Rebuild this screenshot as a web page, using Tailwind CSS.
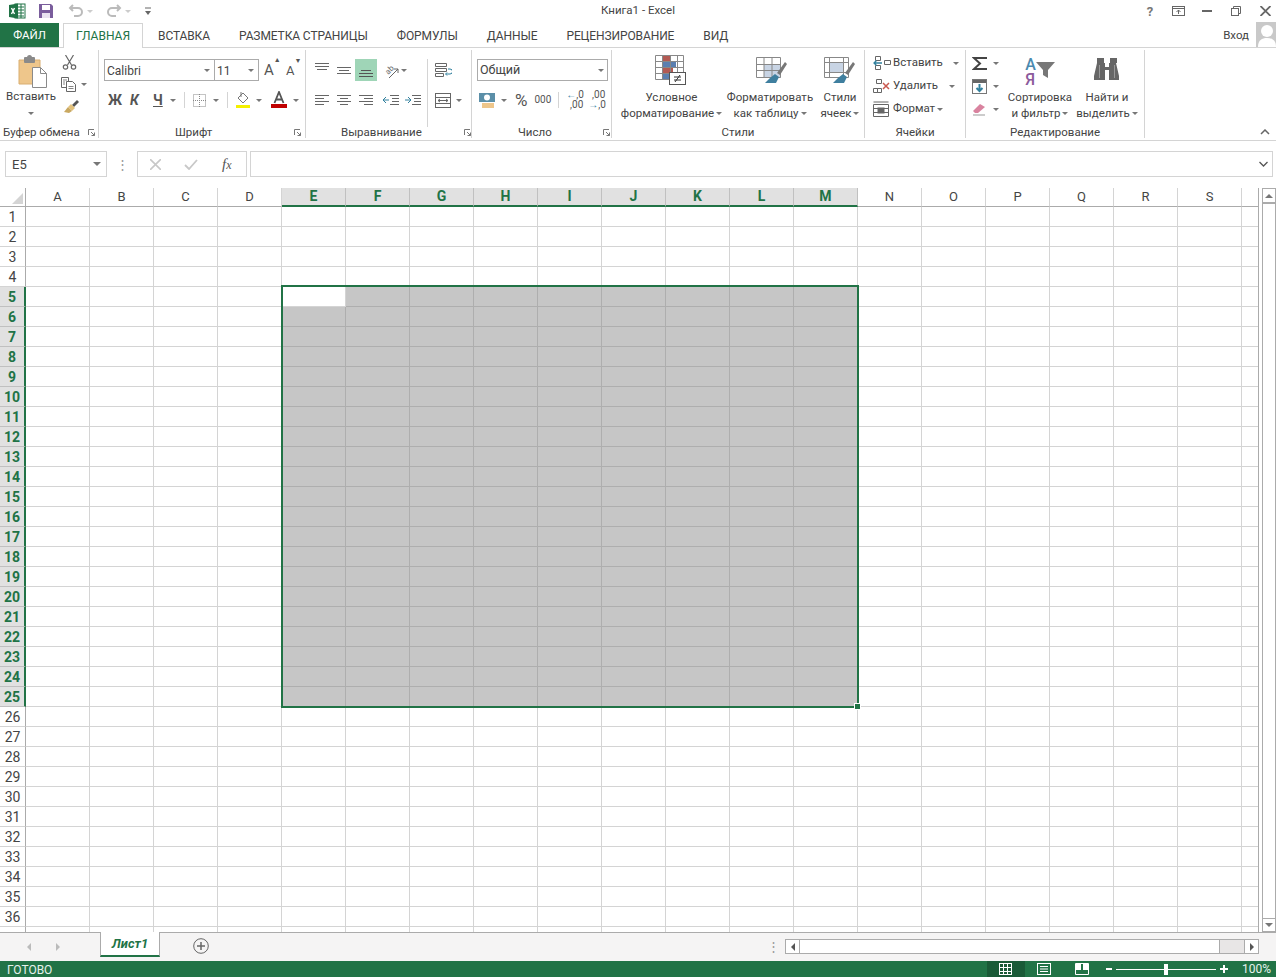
<!DOCTYPE html>
<html lang="ru">
<head>
<meta charset="UTF-8">
<title>Книга1 - Excel</title>
<script src="https://cdn.jsdelivr.net/npm/@tailwindcss/browser@4"></script>
</head>
<body class="bg-white overflow-hidden font-['Roboto','Noto_Sans',sans-serif] text-[12px] leading-none text-[#444]">
<div class="w-[1276px] h-[977px] flex flex-col">

<!-- title bar -->
<header class="h-[22px] flex items-center relative shrink-0">
  <svg class="ml-[9px]" width="17" height="16" viewBox="0 0 17 16"><rect x="6" y="1" width="10" height="14" fill="#fff" stroke="#217346"/><path d="M9 4h6M9 7h6M9 10h6M9 13h6M12 1v14" stroke="#217346"/><path d="M0 2l9-1.500v15L0 14z" fill="#217346"/><path d="M2.500 5l3 6M5.500 5l-3 6" stroke="#fff" stroke-width="1.400"/></svg>
  <svg class="ml-[12px]" width="16" height="16" viewBox="0 0 16 16"><path d="M1 1h12l2 2v12H1z" fill="#7a5d9c"/><rect x="4" y="2" width="8" height="5" fill="#fff"/><rect x="4" y="10" width="8" height="5" fill="#e8e2ef"/></svg>
  <svg class="ml-[14px]" width="16" height="14" viewBox="0 0 16 14" fill="none" stroke="#bbb" stroke-width="2"><path d="M5 1L2 4l3 3M2 4h8a4 4 0 0 1 0 8H6"/></svg>
  <span class="ml-[3px] w-0 h-0 border-x-[3px] border-x-transparent border-t-[3px] border-t-[#ccc]"></span>
  <svg class="ml-[13px]" width="16" height="14" viewBox="0 0 16 14" fill="none" stroke="#bbb" stroke-width="2"><path d="M11 1l3 3-3 3M14 4H6a4 4 0 0 0 0 8h4"/></svg>
  <span class="ml-[3px] w-0 h-0 border-x-[3px] border-x-transparent border-t-[3px] border-t-[#ccc]"></span>
  <svg class="ml-[13px]" width="8" height="9" viewBox="0 0 8 9"><path d="M1 1h6" stroke="#666"/><path d="M1 4h6L4 8z" fill="#666"/></svg>
  <div class="absolute left-0 right-0 top-[5px] text-center text-[11.5px] text-[#444]">Книга1 - Excel</div>
  <div class="ml-auto flex items-center text-[#666]">
    <span class="w-[12px] text-center font-bold text-[13px] text-[#777]">?</span>
    <svg class="ml-[16px]" width="13" height="10" viewBox="0 0 13 10" fill="none" stroke="#666"><rect x=".5" y=".5" width="12" height="9"/><path d="M.5 2.500h12M6.500 8V4M4.500 6l2-2 2 2"/></svg>
    <svg class="ml-[17px]" width="10" height="2" viewBox="0 0 10 2"><path d="M0 1h10" stroke="#666" stroke-width="2"/></svg>
    <svg class="ml-[19px]" width="10" height="10" viewBox="0 0 10 10" fill="none" stroke="#666"><rect x=".5" y="2.500" width="7" height="7"/><path d="M2.500 2.500v-2h7v7h-2"/></svg>
    <svg class="ml-[19px] mr-[5px]" width="11" height="10" viewBox="0 0 11 10" fill="none" stroke="#666" stroke-width="1.800"><path d="M.5 0l10 10M10.500 0l-10 10"/></svg>
  </div>
</header>

<!-- ribbon tabs -->
<nav class="h-[25px] flex shrink-0 relative">
  <div class="mt-[1px] pt-[2px] w-[59px] h-[24px] bg-[#217346] text-white flex items-center justify-center text-[11.5px]">ФАЙЛ</div>
  <div class="mt-[1px] ml-[4px] w-[80px] h-[25px] bg-white border border-b-0 border-[#d4d4d4] text-[#217346] flex items-center justify-center z-10">ГЛАВНАЯ</div>
  <div class="ml-[15px] pt-[2px] flex items-center gap-[29px] tracking-[-0.1px]">
    <span>ВСТАВКА</span><span>РАЗМЕТКА СТРАНИЦЫ</span><span>ФОРМУЛЫ</span><span>ДАННЫЕ</span><span>РЕЦЕНЗИРОВАНИЕ</span><span>ВИД</span>
  </div>
  <div class="ml-auto flex items-center">
    <span class="pt-[2px] text-[11.5px]">Вход</span>
    <div class="ml-[7px] w-[20px] h-[25px] bg-[#c9c9c9] overflow-hidden flex justify-center">
      <svg width="20" height="25" viewBox="0 0 20 25"><circle cx="11" cy="9" r="6" fill="#fff"/><path d="M2 25c0-7 4-9 9-9s9 2 9 9z" fill="#fff"/></svg>
    </div>
  </div>
</nav>

<!-- ribbon -->
<section class="h-[94px] shrink-0 border-t border-b border-[#d4d4d4] flex relative text-[#444] text-[11.5px]">

  <!-- clipboard -->
  <div class="w-[99px] shrink-0 flex flex-col border-r border-[#d4d4d4] my-[2px]">
    <div class="h-[82px] flex">
      <div class="w-[62px] flex flex-col items-center pt-[5px]">
        <svg class="ml-[3px]" width="30" height="33" viewBox="0 0 30 33"><path d="M1 5h21v24H1z" fill="#eec68b" stroke="#d9ae70"/><rect x="6" y="2" width="11" height="6" rx="1" fill="#8a8a8a"/><circle cx="11.500" cy="2.500" r="2.500" fill="#8a8a8a"/><path d="M14.500 12.500h8l6 6v14h-14z" fill="#fff" stroke="#8a8a8a"/><path d="M22.500 12.500v6h6" fill="none" stroke="#8a8a8a"/></svg>
        <span class="mt-[3px]">Вставить</span>
        <span class="mt-[9px] w-0 h-0 border-x-[3px] border-x-transparent border-t-[3px] border-t-[#777]"></span>
      </div>
      <div class="flex flex-col pt-[5px]">
        <svg width="15" height="15" viewBox="0 0 15 15" fill="none" stroke="#666" stroke-width="1.200"><path d="M3.500 0l6 10M11.500 0l-6 10"/><circle cx="3.500" cy="12" r="2.200"/><circle cx="11.500" cy="12" r="2.200"/></svg>
        <div class="mt-[7px] -ml-[1px] flex items-center">
          <svg width="16" height="15" viewBox="0 0 16 15" fill="#fff" stroke="#666"><path d="M.5.500h7v10h-7z"/><path d="M5.500 4.500h6l3 3v7h-9z"/><path d="M2 3h4M2 5h2M2 7h2M7.500 9.500h5M7.500 11.500h5" stroke-width=".8"/></svg>
          <span class="ml-[4px] w-0 h-0 border-x-[3px] border-x-transparent border-t-[3px] border-t-[#777]"></span>
        </div>
        <svg class="mt-[7px]" width="17" height="15" viewBox="0 0 17 15"><path d="M10 6l5-5 2 2-5 5z" fill="#555"/><path d="M9 5l4 4-3 3-4-4z" fill="#e3c27c"/><path d="M6 8l4 4-3 2-5-1z" fill="#c9a860"/></svg>
      </div>
    </div>
    <div class="flex items-center pl-[3px]">
      <span class="w-[85px]">Буфер обмена</span>
      <svg width="7" height="7" viewBox="0 0 7 7" fill="none" stroke="#777"><path d="M.5 6V.5H6M3 3l3.500 3.500M6.500 3.500v3h-3"/></svg>
    </div>
  </div>

  <!-- font -->
  <div class="w-[207px] shrink-0 flex flex-col border-r border-[#d4d4d4] my-[2px]">
    <div class="h-[82px] pl-[5px] flex flex-col">
      <div class="flex items-center mt-[9px] text-[12px]">
        <div class="w-[111px] h-[22px] border border-[#ababab] flex items-center pt-[1px] pl-[2px] pr-[4px] justify-between">Calibri<span class="w-0 h-0 border-x-[3px] border-x-transparent border-t-[3px] border-t-[#777]"></span></div>
        <div class="w-[44px] h-[22px] border border-l-0 border-[#ababab] flex items-center pt-[1px] pl-[2px] pr-[4px] justify-between">11<span class="w-0 h-0 border-x-[3px] border-x-transparent border-t-[3px] border-t-[#777]"></span></div>
        <span class="ml-[5px] w-[22px] text-[15px] text-[#555] flex">A<sup class="text-[7px] mt-[1px]">▲</sup></span>
        <span class="text-[13px] text-[#555] flex">A<sup class="text-[7px] mt-[1px]">▼</sup></span>
      </div>
      <div class="flex items-center mt-[8px] h-[22px]">
        <span class="ml-[4px] w-[22px] font-bold text-[14px] text-[#555]">Ж</span>
        <span class="w-[22px] font-bold italic text-[14px] text-[#555]">К</span>
        <span class="ml-[1px] w-[17px] font-bold text-[14px] text-[#555] underline">Ч</span>
        <span class="w-0 h-0 border-x-[3px] border-x-transparent border-t-[3px] border-t-[#777]"></span>
        <span class="ml-[8px] h-[16px] w-px bg-[#d4d4d4]"></span>
        <svg class="ml-[8px]" width="13" height="13" viewBox="0 0 13 13" fill="none" stroke="#888" stroke-dasharray="1 1"><rect x=".5" y=".5" width="12" height="12"/><path d="M6.500 0v13M0 6.500h13"/></svg>
        <span class="ml-[7px] w-0 h-0 border-x-[3px] border-x-transparent border-t-[3px] border-t-[#777]"></span>
        <span class="ml-[8px] h-[16px] w-px bg-[#d4d4d4]"></span>
        <svg class="ml-[7px]" width="16" height="18" viewBox="0 0 16 18"><path d="M8 2l5 5-5 5-5-5z" fill="#fff" stroke="#777"/><path d="M6 1v5" stroke="#777"/><path d="M1 14h14v3H1z" fill="#f4f000"/></svg>
        <span class="ml-[5px] w-0 h-0 border-x-[3px] border-x-transparent border-t-[3px] border-t-[#777]"></span>
        <svg class="ml-[9px]" width="16" height="18" viewBox="0 0 16 18"><path d="M3.500 12L8 1l4.500 11M5 8.500h6" fill="none" stroke="#555" stroke-width="1.800"/><path d="M0 13h16v4H0z" fill="#c00000"/></svg>
        <span class="ml-[6px] w-0 h-0 border-x-[3px] border-x-transparent border-t-[3px] border-t-[#777]"></span>
      </div>
    </div>
    <div class="flex items-center">
      <span class="ml-[76px] w-[119px]">Шрифт</span>
      <svg width="7" height="7" viewBox="0 0 7 7" fill="none" stroke="#777"><path d="M.5 6V.5H6M3 3l3.500 3.500M6.500 3.500v3h-3"/></svg>
    </div>
  </div>

  <!-- alignment -->
  <div class="w-[166px] shrink-0 flex flex-col border-r border-[#d4d4d4] my-[2px]">
    <div class="h-[82px] flex">
      <div class="w-[121px] flex flex-col pl-[9px]">
        <div class="flex items-center mt-[9px] h-[22px]">
          <svg class="-mt-[4px]" width="14" height="14" viewBox="0 0 14 14" stroke="#666"><path d="M0 2.500h14M0 5.500h14M2 8.500h10"/></svg>
          <svg class="ml-[8px]" width="14" height="14" viewBox="0 0 14 14" stroke="#666"><path d="M0 4.500h14M2 7.500h10M0 10.500h14"/></svg>
          <div class="ml-[4px] w-[22px] h-[22px] bg-[#9fd5b7] flex items-center justify-center"><svg class="mt-[3px]" width="14" height="14" viewBox="0 0 14 14" stroke="#555"><path d="M2 5.500h10M0 8.500h14M0 11.500h14"/></svg></div>
          <svg class="ml-[4px] -my-[2px]" width="20" height="20" viewBox="-3 -3 20 20" fill="none" stroke="#666"><text x="1" y="10" font-size="8" font-family="Roboto" fill="#666" stroke="none" transform="rotate(-45 5 7)">ab</text><path d="M5 15l9-9M14 6v4M14 6h-4"/></svg>
          <span class="w-0 h-0 border-x-[3px] border-x-transparent border-t-[3px] border-t-[#777]"></span>
        </div>
        <div class="flex items-center mt-[8px] h-[22px]">
          <svg width="14" height="12" viewBox="0 0 14 12" stroke="#666"><path d="M0 1.500h14M0 4.500h9M0 7.500h14M0 10.500h9"/></svg>
          <svg class="ml-[8px]" width="14" height="12" viewBox="0 0 14 12" stroke="#666"><path d="M0 1.500h14M3 4.500h8M0 7.500h14M3 10.500h8"/></svg>
          <svg class="ml-[8px]" width="14" height="12" viewBox="0 0 14 12" stroke="#666"><path d="M0 1.500h14M5 4.500h9M0 7.500h14M5 10.500h9"/></svg>
          <svg class="ml-[10px]" width="16" height="12" viewBox="0 0 16 12" fill="none" stroke="#666"><path d="M7 1.500h9M9 4.500h7M9 7.500h7M7 10.500h9"/><path d="M6 6H0M3 3L0 6l3 3" stroke="#31809e"/></svg>
          <svg class="ml-[6px]" width="16" height="12" viewBox="0 0 16 12" fill="none" stroke="#666"><path d="M7 1.500h9M9 4.500h7M9 7.500h7M7 10.500h9"/><path d="M0 6h6M3 3l3 3-3 3" stroke="#31809e"/></svg>
        </div>
      </div>
      <div class="h-[68px] w-px bg-[#d4d4d4] mt-[9px]"></div>
      <div class="flex flex-col pl-[7px]">
        <div class="mt-[9px] h-[22px] flex items-center">
          <svg width="17" height="16" viewBox="0 0 17 16" fill="none" stroke="#666"><path d="M.5 1.500h11v3H.5zM.5 6.500h11v3H.5zM.5 11.500h8v3h-8z"/><path d="M13 7h2a1.500 1.500 0 0 1 0 5h-4M12 10.500L10.500 12l1.500 1.500" stroke="#31809e"/></svg>
        </div>
        <div class="mt-[8px] h-[22px] flex items-center">
          <svg width="16" height="15" viewBox="0 0 16 15" fill="none" stroke="#666"><rect x=".5" y=".5" width="15" height="14"/><path d="M.5 4.500h15M.5 10.500h15M3 7.500h10M3 7.500l2-1.500M3 7.500L5 9M13 7.500L11 6M13 7.500L11 9"/></svg>
          <span class="ml-[5px] w-0 h-0 border-x-[3px] border-x-transparent border-t-[3px] border-t-[#777]"></span>
        </div>
      </div>
    </div>
    <div class="flex items-center">
      <span class="ml-[35px] w-[123px]">Выравнивание</span>
      <svg width="7" height="7" viewBox="0 0 7 7" fill="none" stroke="#777"><path d="M.5 6V.5H6M3 3l3.500 3.500M6.500 3.500v3h-3"/></svg>
    </div>
  </div>

  <!-- number -->
  <div class="w-[140px] shrink-0 flex flex-col border-r border-[#d4d4d4] my-[2px]">
    <div class="h-[82px] pl-[4px] flex flex-col">
      <div class="mt-[9px] ml-[1px] w-[131px] h-[22px] border border-[#ababab] flex items-center pt-[1px] pl-[2px] pr-[3px] justify-between text-[12.5px]">Общий<span class="w-0 h-0 border-x-[3px] border-x-transparent border-t-[3px] border-t-[#777]"></span></div>
      <div class="flex items-center mt-[8px] h-[22px]">
        <svg class="ml-[3px]" width="17" height="17" viewBox="0 0 17 17"><path d="M0 1h16v9H0z" fill="#5b8fa8"/><circle cx="8" cy="5.500" r="3" fill="#fff"/><path d="M3 11h12v5H3z" fill="#eec68b"/></svg>
        <span class="ml-[5px] w-0 h-0 border-x-[3px] border-x-transparent border-t-[3px] border-t-[#777]"></span>
        <span class="ml-[8px] text-[17px] text-[#555]">%</span>
        <span class="ml-[7px] text-[10px] text-[#555]">000</span>
        <span class="ml-[7px] h-[16px] w-px bg-[#d4d4d4]"></span>
        <span class="ml-[7px] w-[17px] text-[10px] text-right text-[#555]"><span class="text-[#31809e]">←</span>,0<br>,00</span>
        <span class="ml-[5px] w-[17px] text-[10px] text-right text-[#555]">,00<br><span class="text-[#31809e]">→</span>,0</span>
      </div>
    </div>
    <div class="flex items-center">
      <span class="ml-[46px] w-[85px]">Число</span>
      <svg width="7" height="7" viewBox="0 0 7 7" fill="none" stroke="#777"><path d="M.5 6V.5H6M3 3l3.500 3.500M6.500 3.500v3h-3"/></svg>
    </div>
  </div>

  <!-- styles -->
  <div class="w-[253px] shrink-0 flex flex-col border-r border-[#d4d4d4] my-[2px]">
    <div class="h-[82px] flex">
      <div class="w-[112px] pl-[7px] flex flex-col items-center pt-[5px]">
        <svg class="-ml-[2px]" width="31" height="30" viewBox="0 0 31 30"><path d="M8 0h8v6H8z" fill="#b35a53"/><path d="M8 6h13v6H8z" fill="#5b7fb0"/><path d="M8 12h10v6H8z" fill="#b35a53"/><path d="M8 18h6v6H8z" fill="#5b7fb0"/><path d="M.5.500h28v24H.5zM.5 6.500h28M.5 12.500h28M.5 18.500h28M7.500.5v24M15.500.5v24M22.500.5v24" stroke="#888" fill="none"/><rect x="14.500" y="17.500" width="16" height="12" fill="#fff" stroke="#555"/><path d="M19 22h7M19 25h7M25 20l-5 7" stroke="#333" fill="none"/></svg>
        <span class="mt-[7px]">Условное</span>
        <span class="mt-[4px] flex items-center">форматирование<span class="ml-[2px] w-0 h-0 border-x-[3px] border-x-transparent border-t-[3px] border-t-[#777]"></span></span>
      </div>
      <div class="w-[92px] flex flex-col items-center pt-[5px]">
        <svg class="ml-[3px]" width="32" height="30" viewBox="0 0 32 30"><path d="M.5 2.500h24v20H.5z" fill="#fff"/><path d="M8 9h17v14H8z" fill="#c8d4e4"/><path d="M.5 2.500h24v20H.5zM.5 9.500h24M.5 15.500h24M8 2.500v20M16 2.500v20" stroke="#888" fill="none"/><path d="M21 18l8-11 2 2-7 11z" fill="#777"/><path d="M14 23l5-4 4 3-3 6H9z" fill="#3f7f9f"/></svg>
        <span class="mt-[7px]">Форматировать</span>
        <span class="mt-[4px] flex items-center">как таблицу<span class="ml-[2px] w-0 h-0 border-x-[3px] border-x-transparent border-t-[3px] border-t-[#777]"></span></span>
      </div>
      <div class="w-[48px] flex flex-col items-center pt-[5px]">
        <svg width="32" height="30" viewBox="0 0 32 30"><path d="M.5 2.500h24v20H.5z" fill="#fff"/><path d="M5 8h15v10H5z" fill="#c8d4e4"/><path d="M.5 2.500h24v20H.5zM5.500 2.500v20M19.500 2.500v20M.5 7.500h24M.5 17.500h24" stroke="#888" fill="none"/><path d="M21 18l8-11 2 2-7 11z" fill="#777"/><path d="M14 23l5-4 4 3-3 6H9z" fill="#3f7f9f"/></svg>
        <span class="mt-[7px]">Стили</span>
        <span class="mt-[4px] flex items-center">ячеек<span class="ml-[2px] w-0 h-0 border-x-[3px] border-x-transparent border-t-[3px] border-t-[#777]"></span></span>
      </div>
    </div>
    <div class="text-center">Стили</div>
  </div>

  <!-- cells -->
  <div class="w-[101px] shrink-0 flex flex-col border-r border-[#d4d4d4] my-[2px]">
    <div class="h-[82px] flex flex-col pl-[8px] pt-[5px] gap-[7px]">
      <div class="h-[16px] flex items-center">
        <svg width="18" height="16" viewBox="0 0 18 16" fill="none" stroke="#666"><path d="M2.500 1.500h5v4h-5zM2.500 10.500h5v4h-5zM11.500 5.500h6v4h-6z"/><path d="M9 8H1M3.500 5.500L1 8l2.500 2.500" stroke="#31809e" stroke-width="1.300"/></svg>
        <span class="ml-[2px] w-[60px]">Вставить</span>
        <span class="w-0 h-0 border-x-[3px] border-x-transparent border-t-[3px] border-t-[#777]"></span>
      </div>
      <div class="h-[16px] flex items-center">
        <svg width="18" height="16" viewBox="0 0 18 16" fill="none" stroke="#666"><path d="M3.500 1.500h5v4h-5zM.5 10.500h4v4h-4zM4.500 10.500h4v4h-4z"/><path d="M10 5l6 6M16 5l-6 6" stroke="#c9584e" stroke-width="1.500"/></svg>
        <span class="ml-[2px] w-[56px]">Удалить</span>
        <span class="w-0 h-0 border-x-[3px] border-x-transparent border-t-[3px] border-t-[#777]"></span>
      </div>
      <div class="h-[16px] flex items-center">
        <svg width="18" height="16" viewBox="0 0 18 16" fill="none" stroke="#666"><path d="M.5 1h15M.5 3.500h15v12H.5zM.5 7.500h15M.5 11.500h15"/><rect x="5" y="7" width="6" height="5" fill="#666"/></svg>
        <span class="ml-[2px]">Формат</span>
        <span class="ml-[2px] w-0 h-0 border-x-[3px] border-x-transparent border-t-[3px] border-t-[#777]"></span>
      </div>
    </div>
    <div class="text-center">Ячейки</div>
  </div>

  <!-- editing -->
  <div class="w-[179px] shrink-0 flex flex-col border-r border-[#d4d4d4] my-[2px]">
    <div class="h-[82px] flex">
      <div class="w-[37px] pl-[6px] pt-[5px] flex flex-col gap-[7px]">
        <div class="h-[16px] flex items-center">
          <svg width="16" height="15" viewBox="0 0 16 15" fill="none" stroke="#444" stroke-width="2"><path d="M15 2H2l6 5.500L2 13h13"/></svg>
          <span class="ml-[5px] w-0 h-0 border-x-[3px] border-x-transparent border-t-[3px] border-t-[#777]"></span>
        </div>
        <div class="h-[16px] flex items-center">
          <svg width="15" height="15" viewBox="0 0 15 15"><rect x=".5" y=".5" width="14" height="14" fill="#fff" stroke="#777"/><path d="M1 1h13v3H1z" fill="#666"/><path d="M7.500 5v7M4.500 9l3 3 3-3" fill="none" stroke="#31809e" stroke-width="2"/></svg>
          <span class="ml-[6px] w-0 h-0 border-x-[3px] border-x-transparent border-t-[3px] border-t-[#777]"></span>
        </div>
        <div class="h-[16px] flex items-center">
          <svg width="16" height="14" viewBox="0 0 16 14"><path d="M1 9l7-7 5 3-7 6H3z" fill="#d9839f"/><path d="M1 13h12" stroke="#999"/></svg>
          <span class="ml-[5px] w-0 h-0 border-x-[3px] border-x-transparent border-t-[3px] border-t-[#777]"></span>
        </div>
      </div>
      <div class="w-[74px] flex flex-col items-center pt-[5px]">
        <div class="h-[30px] flex">
          <div class="flex flex-col text-[16px] font-medium leading-[15px] pt-[2px]"><span class="text-[#4a8ab0]">А</span><span class="text-[#8c5a9c]">Я</span></div>
          <svg class="mt-[7px]" width="19" height="16" viewBox="0 0 19 16"><path d="M0 0h19l-7 8v8l-5-3V8z" fill="#777"/></svg>
        </div>
        <span class="mt-[7px]">Сортировка</span>
        <span class="mt-[4px] flex items-center">и фильтр<span class="ml-[2px] w-0 h-0 border-x-[3px] border-x-transparent border-t-[3px] border-t-[#777]"></span></span>
      </div>
      <div class="w-[60px] flex flex-col items-center pt-[5px]">
        <svg width="28" height="30" viewBox="0 0 28 30"><path d="M4 3h7v5h1v4h4V8h1V3h7v5h-1l3 13v4H16V15h-4v10H1v-4l3-13z" fill="#666"/><path d="M6 10h1v13H6zM21 10h1v13h-1z" fill="#999"/></svg>
        <span class="mt-[7px]">Найти и</span>
        <span class="mt-[4px] flex items-center">выделить<span class="ml-[2px] w-0 h-0 border-x-[3px] border-x-transparent border-t-[3px] border-t-[#777]"></span></span>
      </div>
    </div>
    <div class="text-center">Редактирование</div>
  </div>

  <div class="flex-1 flex items-end justify-end pr-[6px] pb-[5px]">
    <svg width="10" height="6" viewBox="0 0 10 6" fill="none" stroke="#666" stroke-width="1.500"><path d="M1 5l4-4 4 4"/></svg>
  </div>
</section>

<!-- formula bar -->
<div class="h-[47px] shrink-0 flex items-start pt-[10px] pl-[5px] pr-[3px]">
  <div class="w-[102px] h-[26px] border border-[#d4d4d4] flex items-center justify-between pl-[6px] pr-[5px] text-[13px]">E5<span class="w-0 h-0 border-x-[4px] border-x-transparent border-t-[4px] border-t-[#777]"></span></div>
  <div class="w-[30px] h-[26px] flex items-center justify-center text-[#999] text-[13px]">⋮</div>
  <div class="w-[110px] h-[26px] border border-[#d4d4d4] flex items-center">
    <svg class="ml-[12px]" width="11" height="11" viewBox="0 0 11 11" stroke="#c8c8c8" stroke-width="1.600"><path d="M0 0l11 11M11 0L0 11"/></svg>
    <svg class="ml-[23px]" width="14" height="11" viewBox="0 0 14 11" fill="none" stroke="#c8c8c8" stroke-width="1.800"><path d="M1 6l4 4 8-9"/></svg>
    <span class="ml-[24px] font-['Liberation_Serif',serif] italic text-[15px] text-[#555]">f<span class="text-[12px]">x</span></span>
  </div>
  <div class="ml-[3px] flex-1 h-[26px] border border-[#d4d4d4] flex items-center justify-end pr-[4px]">
    <svg width="9" height="6" viewBox="0 0 9 6" fill="none" stroke="#555" stroke-width="1.300"><path d="M.5 1l4 4 4-4"/></svg>
  </div>
</div>

<!-- sheet -->
<div class="flex-1 flex min-h-0">
  <div class="w-[1259px] relative overflow-hidden border-r border-[#ababab]">
    <div id="sheet" class="grid grid-cols-[26px_repeat(20,64px)] auto-rows-[20px] w-[1306px]"></div>
    <!-- selection frame over the cells -->
    <div class="absolute left-[281px] top-[97px] w-[578px] h-[423px] border-2 border-[#217346] pointer-events-none"></div>
    <div class="absolute left-[854px] top-[515px] w-[7px] h-[7px] bg-[#217346] border border-white"></div>
  </div>
  <div class="flex-1 flex flex-col items-end">
    <div class="w-[14px] h-[16px] border border-[#ababab] border-b-2 flex items-center justify-center"><span class="w-0 h-0 border-x-[4px] border-x-transparent border-b-[4px] border-b-[#777]"></span></div>
    <div class="w-[14px] flex-1 border-x border-[#ababab] bg-white"></div>
    <div class="w-[14px] h-[14px] border border-[#ababab] flex items-center justify-center"><span class="w-0 h-0 border-x-[4px] border-x-transparent border-t-[4px] border-t-[#777]"></span></div>
  </div>
</div>

<!-- sheet tabs -->
<div class="h-[29px] shrink-0 bg-[#f5f4f4] border-t border-[#ababab] flex relative">
  <span class="ml-[27px] mt-[10px] w-0 h-0 border-y-[4px] border-y-transparent border-r-[4px] border-r-[#bbb]"></span>
  <span class="ml-[25px] mt-[10px] w-0 h-0 border-y-[4px] border-y-transparent border-l-[4px] border-l-[#bbb]"></span>
  <div class="ml-[40px] -mt-px w-[60px] h-[25px] bg-white border-x border-[#ababab] border-b-2 border-b-[#217346] flex items-center justify-center font-bold italic text-[13px] text-[#217346]">Лист1</div>
  <svg class="ml-[33px] mt-[5px]" width="16" height="16" viewBox="0 0 16 16" fill="none" stroke="#666"><circle cx="8" cy="8" r="7.300"/><path d="M8 4v8M4 8h8" stroke-width="1.500"/></svg>
  <span class="ml-[558px] mt-[7px] text-[#999] text-[13px]">⋮</span>
  <div class="absolute left-[785px] top-[6px] w-[474px] h-[15px] border border-[#ababab] flex">
    <div class="w-[14px] flex items-center justify-center border-r border-[#ababab] bg-white"><span class="w-0 h-0 border-y-[4px] border-y-transparent border-r-[4px] border-r-[#555]"></span></div>
    <div class="w-[420px] bg-white border-r border-[#ababab]"></div>
    <div class="flex-1 bg-[#e8e6e6]"></div>
    <div class="w-[14px] flex items-center justify-center border-l border-[#ababab] bg-white"><span class="w-0 h-0 border-y-[4px] border-y-transparent border-l-[4px] border-l-[#555]"></span></div>
  </div>
</div>

<!-- status bar -->
<footer class="h-[16px] shrink-0 bg-[#217346] text-white flex items-center">
  <span class="ml-[7px] mt-[1px] text-[12px] text-[#e6f2ec]">ГОТОВО</span>
  <div class="ml-auto flex items-center h-full">
    <div class="w-[38px] h-full bg-[#1a5a37] flex items-center justify-center">
      <svg width="13" height="12" viewBox="0 0 13 12" fill="none" stroke="#fff"><path d="M.5 0v12M4.500 0v12M8.500 0v12M12.500 0v12M0 .5h13M0 4.500h13M0 8.500h13M0 11.500h13"/></svg>
    </div>
    <svg class="ml-[12px]" width="14" height="12" viewBox="0 0 14 12" fill="none" stroke="#fff"><rect x=".5" y=".5" width="13" height="11"/><path d="M3 3.500h8M3 6h8M3 8.500h8"/></svg>
    <svg class="ml-[24px]" width="14" height="12" viewBox="0 0 14 12"><path d="M.5.500h13v11H.5z" fill="none" stroke="#fff"/><path d="M1 1h5v6H1zM8 1h5v6H8z" fill="#fff"/></svg>
    <span class="ml-[17px] w-[6px] h-[2px] bg-white"></span>
    <div class="ml-[4px] w-[100px] h-px bg-white flex items-center justify-center"><span class="w-[4px] h-[11px] bg-white"></span></div>
    <svg class="ml-[4px]" width="8" height="8" viewBox="0 0 8 8" stroke="#fff" stroke-width="2"><path d="M0 4h8M4 0v8"/></svg>
    <span class="ml-[14px] mr-[5px] text-[12px] text-[#e6f2ec]">100%</span>
  </div>
</footer>
</div>

<script>
// build the grid: corner + column letters, then 36 rows
var cols = 'ABCDEFGHIJKLMNOPQRS '.split('');
var html = '<div class="bg-white border-r border-b border-[#ababab] flex items-end justify-end pr-[2px] pb-[2px] h-[19px]"><svg width="11" height="11" viewBox="0 0 11 11"><path d="M11 0v11H0z" fill="#d4d4d4"/></svg></div>';
cols.forEach(function (c, i) {
  if (i >= 4 && i <= 12) {
    html += '<div class="h-[19px] pb-[1px] bg-[#e1e1e1] border-r border-[#c0c0c0] border-b-2 border-b-[#217346] flex items-center justify-center font-bold text-[14px] text-[#217346]">' + c + '</div>';
  } else {
    html += '<div class="h-[19px] pb-[2px] bg-white border-r border-[#d4d4d4] border-b border-b-[#ababab] flex items-center justify-center text-[13px] text-[#444]">' + c + '</div>';
  }
});
for (var r = 1; r <= 37; r++) {
  if (r >= 5 && r <= 25) {
    html += '<div class="-mt-px pt-[1px] h-[20px] bg-[#e1e1e1] border-r-2 border-r-[#217346] border-b border-b-[#c0c0c0] flex items-center justify-center font-bold text-[14px] text-[#217346]">' + r + '</div>';
  } else {
    html += '<div class="-mt-px pt-[1px] h-[20px] bg-white border-r border-r-[#ababab] border-b border-b-[#d4d4d4] flex items-center justify-center text-[14px] text-[#444]">' + (r < 37 ? r : '') + '</div>';
  }
  cols.forEach(function (c, i) {
    var sel = r >= 5 && r <= 25 && i >= 4 && i <= 12;
    var active = r === 5 && i === 4;
    if (active) html += '<div class="-mt-px h-[20px] bg-white border-r border-b border-[#d4d4d4]"></div>';
    else if (sel) html += '<div class="-mt-px h-[20px] bg-[#c6c6c6] border-r border-b border-[#aeaeae]"></div>';
    else html += '<div class="-mt-px h-[20px] bg-white border-r border-b border-[#d4d4d4]"></div>';
  });
}
document.getElementById('sheet').innerHTML = html;
</script>
</body>
</html>
